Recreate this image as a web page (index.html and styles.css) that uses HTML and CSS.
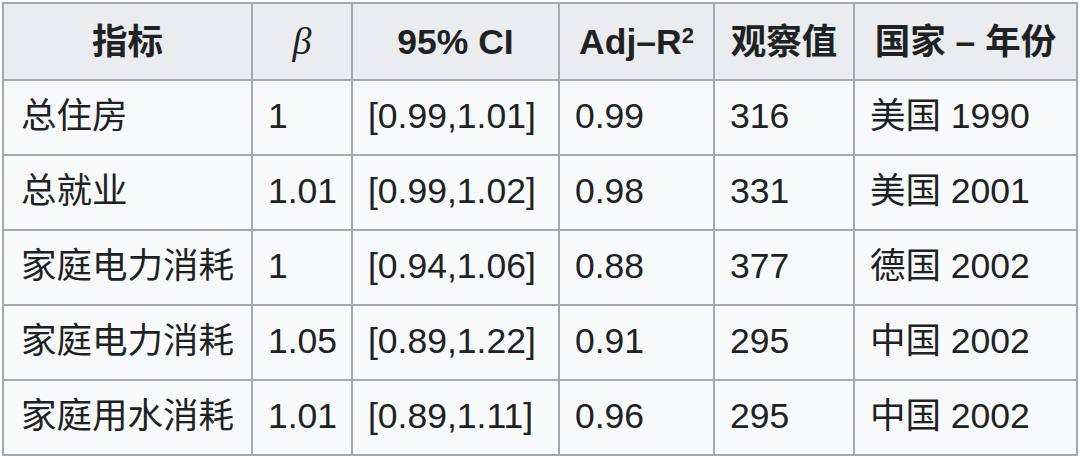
FILE: index.html
```html
<!DOCTYPE html>
<html lang="zh">
<head>
<meta charset="utf-8">
<link rel="stylesheet" href="styles.css">
</head>
<body>
<table class="wikitable">
  <colgroup>
    <col class="c1"><col class="c2"><col class="c3"><col class="c4"><col class="c5"><col class="c6">
  </colgroup>
  <thead>
    <tr>
      <th>指标</th>
      <th><span class="beta">β</span></th>
      <th>95% CI</th>
      <th>Adj–R<sup>2</sup></th>
      <th>观察值</th>
      <th>国家 – 年份</th>
    </tr>
  </thead>
  <tbody>
    <tr><td>总住房</td><td>1</td><td>[0.99,1.01]</td><td>0.99</td><td>316</td><td>美国 1990</td></tr>
    <tr><td>总就业</td><td>1.01</td><td>[0.99,1.02]</td><td>0.98</td><td>331</td><td>美国 2001</td></tr>
    <tr><td>家庭电力消耗</td><td>1</td><td>[0.94,1.06]</td><td>0.88</td><td>377</td><td>德国 2002</td></tr>
    <tr><td>家庭电力消耗</td><td>1.05</td><td>[0.89,1.22]</td><td>0.91</td><td>295</td><td>中国 2002</td></tr>
    <tr><td>家庭用水消耗</td><td>1.01</td><td>[0.89,1.11]</td><td>0.96</td><td>295</td><td>中国 2002</td></tr>
  </tbody>
</table>
</body>
</html>
```

FILE: styles.css
```css
html, body {
  margin: 0;
  padding: 0;
  background: #ffffff;
}

body {
  padding: 2px 0 0 2px;
  font-family: "Liberation Sans", "Noto Sans CJK SC", sans-serif;
  color: #202122;
}

.wikitable {
  border-collapse: separate;
  border-spacing: 0;
  table-layout: fixed;
  width: 1076px;
  border-top: 2px solid #a2a9b1;
  border-left: 2px solid #a2a9b1;
  background: #f8f9fa;
  font-size: 35.5px;
}

.c1 { width: 249px; }
.c2 { width: 100px; }
.c3 { width: 207px; }
.c4 { width: 155px; }
.c5 { width: 140px; }
.c6 { width: 223px; }

.wikitable th,
.wikitable td {
  border-right: 2px solid #a2a9b1;
  border-bottom: 2px solid #a2a9b1;
  padding: 0 15px;
  white-space: nowrap;
  overflow: hidden;
  vertical-align: middle;
}

.wikitable th {
  background: #eaecf0;
  font-weight: bold;
  text-align: center;
  line-height: 74px;
  height: 74px;
}

.wikitable td {
  text-align: left;
  line-height: 71px;
  height: 71px;
  padding-bottom: 2px;
}

.wikitable td:first-child {
  padding-left: 17px;
}

.beta {
  font-family: "Liberation Serif", "DejaVu Serif", serif;
  font-style: italic;
  font-weight: normal;
  font-size: 38px;
}

.wikitable sup {
  font-size: 22px;
  line-height: 0;
  vertical-align: 11px;
}
```
